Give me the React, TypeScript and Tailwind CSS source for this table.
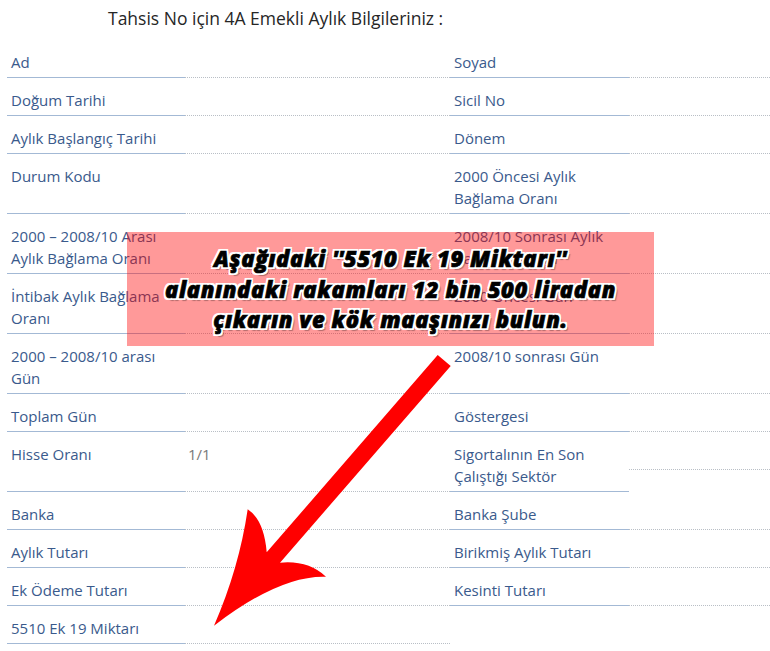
import React from "react";

type Row = {
  l1: string[];
  v1?: string;
  l2?: string[];
  h: 38 | 60;
  shortV2?: boolean;
  noRight?: boolean;
};

const rows: Row[] = [
  { l1: ["Ad"], l2: ["Soyad"], h: 38 },
  { l1: ["Doğum Tarihi"], l2: ["Sicil No"], h: 38 },
  { l1: ["Aylık Başlangıç Tarihi"], l2: ["Dönem"], h: 38 },
  { l1: ["Durum Kodu"], l2: ["2000 Öncesi Aylık", "Bağlama Oranı"], h: 60 },
  { l1: ["2000 – 2008/10 Arası", "Aylık Bağlama Oranı"], l2: ["2008/10 Sonrası Aylık", "Bağlama Oranı"], h: 60 },
  { l1: ["İntibak Aylık Bağlama", "Oranı"], l2: ["2000 Öncesi Gün"], h: 60 },
  { l1: ["2000 – 2008/10 arası", "Gün"], l2: ["2008/10 sonrası Gün"], h: 60 },
  { l1: ["Toplam Gün"], l2: ["Göstergesi"], h: 38 },
  { l1: ["Hisse Oranı"], v1: "1/1", l2: ["Sigortalının En Son", "Çalıştığı Sektör"], h: 60, shortV2: true },
  { l1: ["Banka"], l2: ["Banka Şube"], h: 38 },
  { l1: ["Aylık Tutarı"], l2: ["Birikmiş Aylık Tutarı"], h: 38 },
  { l1: ["Ek Ödeme Tutarı"], l2: ["Kesinti Tutarı"], h: 38 },
  { l1: ["5510 Ek 19 Miktarı"], h: 38, noRight: true },
];

function Label({ lines, h }: { lines: string[]; h: number }) {
  return (
    <div
      className="border-b border-[#a3b9d5] pl-[4px] pt-[11px] text-[15px] font-medium leading-[22px] text-[#3a5a8c]"
      style={{ height: h }}
    >
      {lines.map((t, i) => (
        <div key={i} className="whitespace-nowrap">
          {t}
        </div>
      ))}
    </div>
  );
}

function Value({ text, h }: { text?: string; h: number }) {
  return (
    <div
      className="border-b border-dotted border-[#b9bfc6] pl-[3px] pt-[11px] text-[15px] leading-[22px] text-[#7a7a7a]"
      style={{ height: h }}
    >
      {text ?? ""}
    </div>
  );
}

export default function App() {
  return (
    <div
      className="relative h-[651px] w-[770px] overflow-hidden bg-white"
      style={{ fontFamily: '"Open Sans", "Noto Sans", sans-serif' }}
    >
      <div className="h-[40px] pl-[108px] pt-[6px] text-[17.5px] leading-[24px] text-[#262626]">
        Tahsis No için 4A Emekli Aylık Bilgileriniz :
      </div>

      <div className="grid grid-cols-[178px_265px_179px_141px] pl-[7px]">
        {rows.map((r, i) => (
          <React.Fragment key={i}>
            <Label lines={r.l1} h={r.h} />
            <Value text={r.v1} h={r.h} />
            {r.noRight ? (
              <>
                <div />
                <div />
              </>
            ) : (
              <>
                <Label lines={r.l2 ?? []} h={r.h} />
                {r.shortV2 ? (
                  <div className="self-start">
                    <Value h={38} />
                  </div>
                ) : (
                  <Value h={r.h} />
                )}
              </>
            )}
          </React.Fragment>
        ))}
      </div>

      {/* overlay note */}
      <div className="absolute left-[127px] top-[232px] flex h-[114px] w-[527px] flex-col items-center justify-center bg-[rgba(255,0,0,0.4)]">
        <div
          className="whitespace-nowrap text-center text-[22px] font-extrabold italic leading-[30.5px] tracking-[0.6px] text-black [-webkit-text-stroke:0.7px_#000] [text-shadow:2px_2px_0_#fff,-2px_-2px_0_#fff,2px_-2px_0_#fff,-2px_2px_0_#fff,0_2px_0_#fff,0_-2px_0_#fff,2px_0_0_#fff,-2px_0_0_#fff,3px_3px_1px_rgba(0,0,0,0.3)]"
          style={{ fontFamily: '"Open Sans", "Lato", sans-serif' }}
        >
          <div>Aşağıdaki ''5510 Ek 19 Miktarı''</div>
          <div>alanındaki rakamları 12 bin 500 liradan</div>
          <div>çıkarın ve kök maaşınızı bulun.</div>
        </div>
      </div>

      {/* red arrow */}
      <svg
        className="pointer-events-none absolute left-0 top-0"
        width="770"
        height="651"
        viewBox="0 0 770 651"
      >
        <path
          d="M437.7 355 L450.7 366 L280 562.7 Q308 560 326 576.7 Q280 575 214 625.7 Q239 568.5 247.7 509.3 Q264 520 266.7 552.3 Z"
          fill="#ff0000"
        />
      </svg>
    </div>
  );
}
